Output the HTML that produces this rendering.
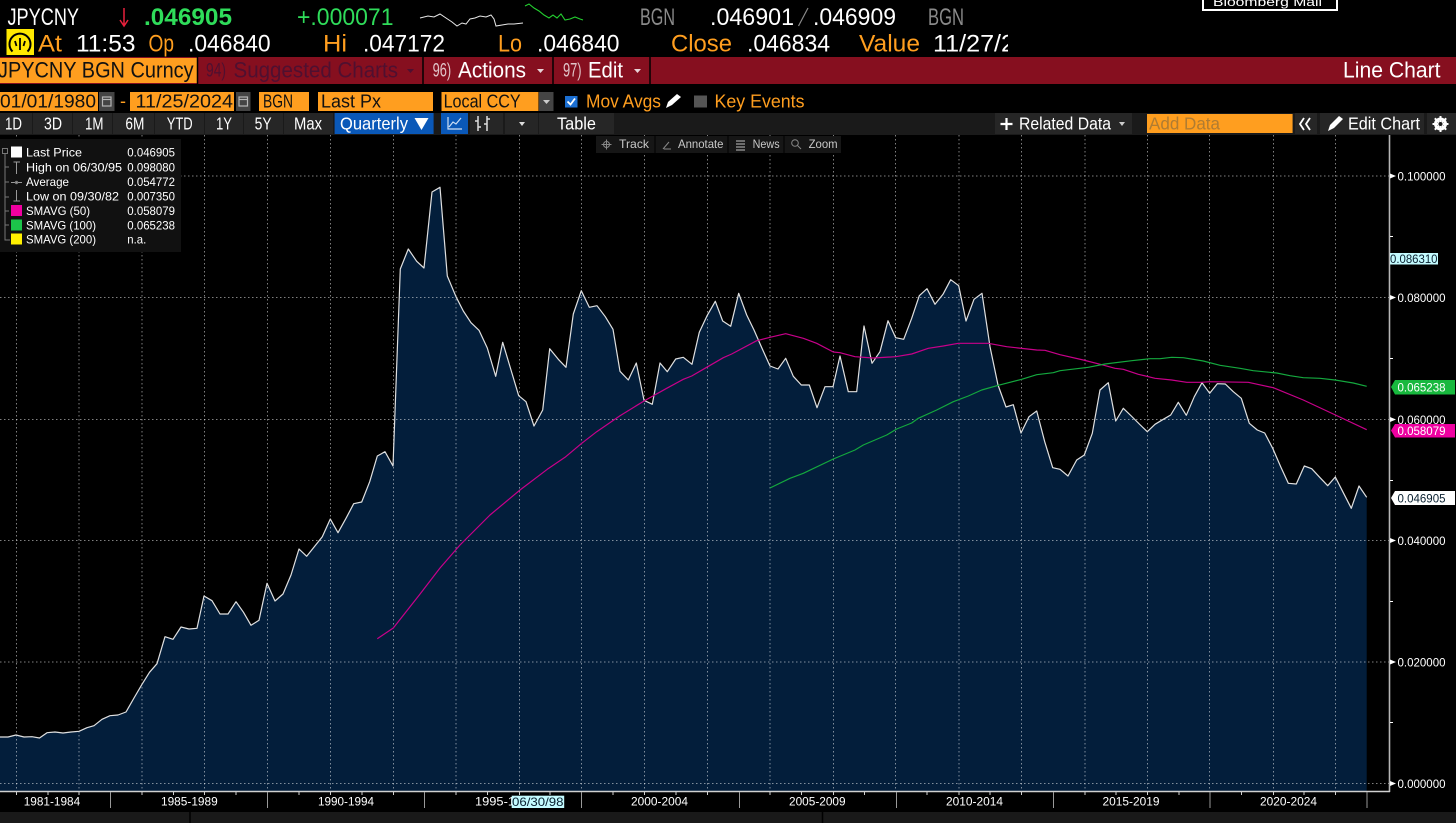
<!DOCTYPE html>
<html><head><meta charset="utf-8"><title>JPYCNY BGN Curncy</title>
<style>
html,body{margin:0;padding:0;background:#000;width:1456px;height:823px;overflow:hidden}
svg{display:block;position:absolute;left:0;top:0}
text{font-family:"Liberation Sans",sans-serif;white-space:pre}
.r1{font-size:24px}.r3{font-size:22.5px}.r4{font-size:18px}.r5{font-size:17.5px}
.l{font-size:12px;fill:#fff}.a{font-size:12px;fill:#fff}
.o{fill:#ff9e1f}.w{fill:#fff}.g{fill:#8a8a8a}.gr{fill:#2fdc5a}.k{fill:#111}
</style></head><body>
<svg width="1456" height="823" viewBox="0 0 1456 823" xmlns="http://www.w3.org/2000/svg">
<rect width="1456" height="823" fill="#000"/>

<!-- Chart fill and lines -->
<polygon fill="#031e3b" points="0,791 0,737 8,737 16,735 24,737 32,736.7 39.5,738 47,732.7 55,732 63,733 71,732 79,731.3 87,727.7 94,725.7 102,719.3 110,715.7 118,715 126,712 134,698 142,684.3 149.5,672.3 157,663.7 165,636.7 173,639.3 181,627 189,629 197,628.3 204,596 212,600.7 220,614 228,614 236,601.7 243.5,612.3 251,625.3 259,620.3 267,583.3 275,601 283,594 291,575 299,549 306.7,556.3 314.7,546.3 322.3,536.7 330.3,519 338,532.7 346,518.3 353.7,503.7 361.7,502 369.7,481.7 377.3,456 385,451.7 393,466 400.3,269 408.3,249 416.7,261.3 424,268 432,192 440,187.3 447.3,276 456,296.7 463.3,311 471,322.7 479,330.3 487.3,348 495.7,376.3 502.7,342.3 510.7,369 518.7,395.7 526,401.7 534,426 542.7,410 549.7,348.7 558.3,359.3 566,367.3 573.3,314 581.3,290.7 589.3,307.3 597,305.7 605.3,316.7 613,329.3 620,371.3 628.3,380 636.3,363 644,400.3 652.3,404.3 660,363 667.3,371.7 675.7,359 683.3,357.3 692,364.3 699.3,332.3 707.3,315.3 715.3,301.3 722.7,321 730.7,326.3 738.7,293.3 746.7,315 754,330 762,348.3 770,366 778,369 785.7,358.3 793.3,376.3 801.3,385 809.3,385 817,407.7 825,386.7 833,386.7 840,356 848.3,391.7 856.7,391.7 864,326 872,363.3 880,351.7 888,320.7 895.7,337.7 903.7,339.3 911.7,318.3 919.3,295.7 927,288.7 935,304.3 943,294.3 950.7,279.7 958.7,285.7 966,321 974,299.3 982,293.3 990,346.7 998,385 1006,407 1013.3,404.7 1021,433 1029,416.7 1036.7,411 1044.7,441.7 1052.7,467.7 1060,469.3 1068,476 1076.7,460 1084.3,455 1092.3,433.3 1100,390 1108.3,382.7 1115.7,421 1123.3,408.3 1131.3,416 1139.3,424 1147.3,431.7 1155,424.3 1163.3,419.3 1170.7,415 1178.3,402.3 1186.3,415.3 1194.3,396.7 1202,382.7 1209.7,393.3 1217.3,383.7 1225.3,384 1233.3,391.7 1241.3,398.3 1249.3,423.3 1257.3,430 1264.7,433 1272.7,448.3 1280.7,466.7 1288.3,483.3 1296.3,484 1304.3,466 1311.7,468.7 1319.7,477.3 1327.7,485.7 1335.3,477 1343.3,492.7 1351.3,508.3 1359,486 1366.7,497.3 1366.7,791"/>

<g stroke="#fff" stroke-opacity=".5" stroke-width="1" stroke-dasharray="1.5 2.5" fill="none">
<path d="M0 176H1389M0 297.5H1389M0 419.5H1389M0 540.5H1389M0 662H1389M0 783.5H1389"/>
<path d="M16.5 135V791M79 135V791M142 135V791M204.5 135V791M267.5 135V791M330.5 135V791M393.5 135V791M456 135V791M519.5 135V791M581.5 135V791M644.5 135V791M707.5 135V791M770 135V791M833.5 135V791M895.5 135V791M959 135V791M1021.5 135V791M1085 135V791M1147.5 135V791M1209.5 135V791M1273.5 135V791M1335.5 135V791"/>
</g>

<polyline fill="none" stroke="#e0e0e0" stroke-width="1.2" stroke-linejoin="round" points="0,737 8,737 16,735 24,737 32,736.7 39.5,738 47,732.7 55,732 63,733 71,732 79,731.3 87,727.7 94,725.7 102,719.3 110,715.7 118,715 126,712 134,698 142,684.3 149.5,672.3 157,663.7 165,636.7 173,639.3 181,627 189,629 197,628.3 204,596 212,600.7 220,614 228,614 236,601.7 243.5,612.3 251,625.3 259,620.3 267,583.3 275,601 283,594 291,575 299,549 306.7,556.3 314.7,546.3 322.3,536.7 330.3,519 338,532.7 346,518.3 353.7,503.7 361.7,502 369.7,481.7 377.3,456 385,451.7 393,466 400.3,269 408.3,249 416.7,261.3 424,268 432,192 440,187.3 447.3,276 456,296.7 463.3,311 471,322.7 479,330.3 487.3,348 495.7,376.3 502.7,342.3 510.7,369 518.7,395.7 526,401.7 534,426 542.7,410 549.7,348.7 558.3,359.3 566,367.3 573.3,314 581.3,290.7 589.3,307.3 597,305.7 605.3,316.7 613,329.3 620,371.3 628.3,380 636.3,363 644,400.3 652.3,404.3 660,363 667.3,371.7 675.7,359 683.3,357.3 692,364.3 699.3,332.3 707.3,315.3 715.3,301.3 722.7,321 730.7,326.3 738.7,293.3 746.7,315 754,330 762,348.3 770,366 778,369 785.7,358.3 793.3,376.3 801.3,385 809.3,385 817,407.7 825,386.7 833,386.7 840,356 848.3,391.7 856.7,391.7 864,326 872,363.3 880,351.7 888,320.7 895.7,337.7 903.7,339.3 911.7,318.3 919.3,295.7 927,288.7 935,304.3 943,294.3 950.7,279.7 958.7,285.7 966,321 974,299.3 982,293.3 990,346.7 998,385 1006,407 1013.3,404.7 1021,433 1029,416.7 1036.7,411 1044.7,441.7 1052.7,467.7 1060,469.3 1068,476 1076.7,460 1084.3,455 1092.3,433.3 1100,390 1108.3,382.7 1115.7,421 1123.3,408.3 1131.3,416 1139.3,424 1147.3,431.7 1155,424.3 1163.3,419.3 1170.7,415 1178.3,402.3 1186.3,415.3 1194.3,396.7 1202,382.7 1209.7,393.3 1217.3,383.7 1225.3,384 1233.3,391.7 1241.3,398.3 1249.3,423.3 1257.3,430 1264.7,433 1272.7,448.3 1280.7,466.7 1288.3,483.3 1296.3,484 1304.3,466 1311.7,468.7 1319.7,477.3 1327.7,485.7 1335.3,477 1343.3,492.7 1351.3,508.3 1359,486 1366.7,497.3"/>

<polyline fill="none" stroke="#c8008a" stroke-width="1.2" stroke-linejoin="round" points="377.3,638.7 393.3,628 419.3,595 440,568 460,545 490,515 520,490 547.3,469.3 565,457.3 581.7,443.3 596.7,431.7 620,415.7 644,401 666.7,388.3 683.3,379.3 691.7,376 706.7,367.3 723.3,357.7 731.7,354 756.7,340.7 770,337.3 785.7,333.7 803.3,338.3 816.7,343.3 833.3,352 840,352.7 855,356.7 873.3,358 895.7,356.7 911.7,354 928.3,348.3 943.3,346 958.3,343.3 988.3,343.3 1006.7,346.7 1036.7,350 1045,350.3 1060,354.7 1083.3,360 1101.7,364.7 1115,368.3 1123.3,369.3 1138.3,374.3 1155,378.3 1171.7,380 1186.7,382.3 1201.7,382.3 1210,381.7 1248.3,382.3 1273.3,387.7 1303.3,400 1333.3,414 1366.7,429.7"/>
<polyline fill="none" stroke="#14a83e" stroke-width="1.2" stroke-linejoin="round" points="770,488 790,478.3 803.3,473.3 833.3,459 855,450 863.3,445 886.7,435 896.7,429 911.7,423 918.3,418.3 936.7,410 953.3,401.7 968.3,396 981.7,390 998.3,385.3 1021.7,379.3 1036.7,374.7 1053.3,372.7 1060,370.7 1088.3,367.3 1105,364 1131.7,360.7 1150,358.7 1160,358.7 1171.7,357.3 1183.3,357.7 1203.3,361 1220,365.3 1240,368.3 1253.3,370.7 1276.7,373 1290,375.7 1303.3,377.7 1320,378.3 1335,380 1353.3,383 1366.7,386.3"/>

<!-- Header row 1 -->
<text class="r1 w" x="7.5" y="25" textLength="71.5" lengthAdjust="spacingAndGlyphs">JPYCNY</text>
<path d="M124 8V25M120 20L124 26L128 20" fill="none" stroke="#e8213c" stroke-width="1.5"/>
<text class="r1 gr" x="144" y="25" textLength="88" lengthAdjust="spacingAndGlyphs" font-weight="bold">.046905</text>
<text class="r1 gr" x="297" y="25" textLength="96.5" lengthAdjust="spacingAndGlyphs">+.000071</text>
<polyline fill="none" stroke="#e8e8e8" stroke-width="1" points="420,18 428,16 434,17 440,14 446,18 452,22 457,26 462,23 466,24 470,19 475,18 480,16 486,17 491,15 494,19 496,26 502,25 508,24 514,24 523,23"/>
<polyline fill="none" stroke="#24d030" stroke-width="1.1" points="525,6 529,4 534,8 539,11 544,15 549,18 553,15 557,18 561,14 565,20 570,19 575,17 580,19 583,20"/>
<text class="r1 g" x="640" y="25" textLength="35" lengthAdjust="spacingAndGlyphs">BGN</text>
<text class="r1 w" x="710" y="25" textLength="84" lengthAdjust="spacingAndGlyphs">.046901</text>
<path d="M798.5 26L808 8" stroke="#8a8a8a" stroke-width="1.2"/>
<text class="r1 w" x="813" y="25" textLength="83" lengthAdjust="spacingAndGlyphs">.046909</text>
<text class="r1 g" x="928" y="25" textLength="36" lengthAdjust="spacingAndGlyphs">BGN</text>
<rect x="1203" y="-3" width="134" height="13" fill="#000" stroke="#fff" stroke-width="2"/>
<text x="1213" y="6" font-size="12" fill="#fff" textLength="109" lengthAdjust="spacingAndGlyphs">Bloomberg Mail</text>

<!-- Header row 2 -->
<rect x="6.500" y="29" width="27.500" height="26" fill="#ffe800"/>
<path d="M12.500 51.500A10.500 10.500 0 1 1 27.500 51.500" fill="none" stroke="#000" stroke-width="2"/>
<path d="M20 38V50M15 41L16.500 46M25 41L23.500 46" stroke="#000" stroke-width="1.800" fill="none"/>
<text class="r1 o" x="38" y="51.500" textLength="24" lengthAdjust="spacingAndGlyphs">At</text>
<text class="r1 w" x="76" y="51.500" textLength="59.500" lengthAdjust="spacingAndGlyphs">11:53</text>
<text class="r1 o" x="148.500" y="51.500" textLength="25.500" lengthAdjust="spacingAndGlyphs">Op</text>
<text class="r1 w" x="188" y="51.500" textLength="82.600" lengthAdjust="spacingAndGlyphs">.046840</text>
<text class="r1 o" x="323" y="51.500" textLength="24" lengthAdjust="spacingAndGlyphs">Hi</text>
<text class="r1 w" x="363" y="51.500" textLength="82" lengthAdjust="spacingAndGlyphs">.047172</text>
<text class="r1 o" x="498" y="51.500" textLength="24" lengthAdjust="spacingAndGlyphs">Lo</text>
<text class="r1 w" x="537" y="51.500" textLength="82.500" lengthAdjust="spacingAndGlyphs">.046840</text>
<text class="r1 o" x="671" y="51.500" textLength="61" lengthAdjust="spacingAndGlyphs">Close</text>
<text class="r1 w" x="747" y="51.500" textLength="83" lengthAdjust="spacingAndGlyphs">.046834</text>
<text class="r1 o" x="859" y="51.500" textLength="61" lengthAdjust="spacingAndGlyphs">Value</text>
<svg x="933" y="28" width="75" height="30" viewBox="933 28 75 30"><text class="r1 w" x="933" y="51.500" textLength="96" lengthAdjust="spacingAndGlyphs">11/27/24</text></svg>

<!-- Row 3: red bar -->
<rect x="0" y="57" width="1456" height="27" fill="#860f1f"/>
<rect x="0" y="58" width="197" height="25" fill="#ff9e1f"/>
<text class="r3 k" x="-2" y="77.500" textLength="195.600" lengthAdjust="spacingAndGlyphs">JPYCNY BGN Curncy</text>
<path d="M197.500 57V84M423 57V84M553 57V84M650 57V84" stroke="#000" stroke-width="1.5"/>
<text x="206" y="76.500" font-size="19" fill="#4f1030" textLength="20" lengthAdjust="spacingAndGlyphs">94)</text>
<text class="r3" x="233.500" y="77.500" fill="#4f1030" textLength="164.500" lengthAdjust="spacingAndGlyphs">Suggested Charts</text>
<path d="M407 69H414L410.500 73Z" fill="#4f1030"/>
<text x="432.600" y="76.500" font-size="19" fill="#e0c4c8" textLength="18.500" lengthAdjust="spacingAndGlyphs">96)</text>
<text class="r3 w" x="458" y="77.500" textLength="68" lengthAdjust="spacingAndGlyphs">Actions</text>
<path d="M537 69H544L540.500 73Z" fill="#e8d4d8"/>
<text x="563" y="76.500" font-size="19" fill="#e0c4c8" textLength="18.600" lengthAdjust="spacingAndGlyphs">97)</text>
<text class="r3 w" x="588" y="77.500" textLength="35" lengthAdjust="spacingAndGlyphs">Edit</text>
<path d="M634 69H641L637.500 73Z" fill="#e8d4d8"/>
<text class="r3 w" x="1343" y="77.500" textLength="97.500" lengthAdjust="spacingAndGlyphs">Line Chart</text>

<!-- Row 4 -->
<g fill="#ff9e1f">
<rect x="0" y="92" width="98" height="19"/>
<rect x="130" y="92" width="104" height="19"/>
<rect x="259" y="92" width="50" height="19"/>
<rect x="318" y="92" width="115" height="19"/>
<rect x="441.500" y="92" width="97" height="19"/>
</g>
<g fill="#444">
<rect x="99" y="92" width="15.500" height="19"/>
<rect x="236" y="92" width="14.500" height="19"/>
<rect x="539" y="92" width="14.500" height="19"/>
</g>
<g fill="none" stroke="#b5b5b5" stroke-width="1.200">
<rect x="102.500" y="97" width="8.500" height="9"/><path d="M102.500 99.500H111"/>
<rect x="239" y="97" width="8.500" height="9"/><path d="M239 99.500H247.500"/>
</g>
<path d="M543 100H550L546.500 104Z" fill="#ccc"/>
<text class="r4 k" x="0" y="107.500" textLength="96" lengthAdjust="spacingAndGlyphs">01/01/1980</text>
<text class="r4 o" x="120" y="107">-</text>
<text class="r4 k" x="135.500" y="107.500" textLength="97.500" lengthAdjust="spacingAndGlyphs">11/25/2024</text>
<text class="r4 k" x="263" y="107.500" textLength="30" lengthAdjust="spacingAndGlyphs">BGN</text>
<text class="r4 k" x="321" y="107.500" textLength="60" lengthAdjust="spacingAndGlyphs">Last Px</text>
<text class="r4 k" x="443.600" y="107.500" textLength="77" lengthAdjust="spacingAndGlyphs">Local CCY</text>
<rect x="565" y="96" width="12.500" height="11.500" fill="#1b6fd2"/>
<path d="M567.500 101.500L570.500 104.500L575 98.500" fill="none" stroke="#fff" stroke-width="1.800"/>
<text class="r4 o" x="586" y="107.500" textLength="75" lengthAdjust="spacingAndGlyphs">Mov Avgs</text>
<path d="M666 108L668 102L677 94L681 97L672 105Z" fill="#fff"/>
<rect x="694" y="95.500" width="13" height="12" fill="#555"/>
<text class="r4 o" x="714.500" y="107.500" textLength="90" lengthAdjust="spacingAndGlyphs">Key Events</text>

<!-- Row 5 -->
<rect x="0" y="113" width="1456" height="22" fill="#1a1a1a"/>
<g fill="#262626">
<rect x="0" y="113" width="32" height="21"/><rect x="33" y="113" width="39" height="21"/><rect x="73" y="113" width="39" height="21"/><rect x="113" y="113" width="41" height="21"/><rect x="155" y="113" width="49" height="21"/><rect x="205" y="113" width="38" height="21"/><rect x="244" y="113" width="39" height="21"/><rect x="284" y="113" width="49" height="21"/>
<rect x="470" y="113" width="33" height="21"/><rect x="505" y="113" width="33" height="21"/><rect x="539" y="113" width="75" height="21"/>
<rect x="995" y="113" width="137" height="21"/><rect x="1295" y="113" width="22" height="21"/><rect x="1320" y="113" width="104" height="21"/><rect x="1427" y="113" width="29" height="21"/>
</g>
<rect x="334.600" y="113" width="99" height="21" fill="#0a58b8"/>
<rect x="441" y="113" width="27" height="21" fill="#0a58b8"/>
<g>
<text class="r5 w" x="5" y="129.500" textLength="17" lengthAdjust="spacingAndGlyphs">1D</text>
<text class="r5 w" x="44" y="129.500" textLength="18" lengthAdjust="spacingAndGlyphs">3D</text>
<text class="r5 w" x="85" y="129.500" textLength="18.500" lengthAdjust="spacingAndGlyphs">1M</text>
<text class="r5 w" x="125.400" y="129.500" textLength="19" lengthAdjust="spacingAndGlyphs">6M</text>
<text class="r5 w" x="166.700" y="129.500" textLength="26" lengthAdjust="spacingAndGlyphs">YTD</text>
<text class="r5 w" x="216" y="129.500" textLength="16" lengthAdjust="spacingAndGlyphs">1Y</text>
<text class="r5 w" x="254.600" y="129.500" textLength="17" lengthAdjust="spacingAndGlyphs">5Y</text>
<text class="r5 w" x="294" y="129.500" textLength="28" lengthAdjust="spacingAndGlyphs">Max</text>
<text class="r5 w" x="340" y="129.500" textLength="68" lengthAdjust="spacingAndGlyphs">Quarterly</text>
<text class="r5 w" x="557" y="129.500" textLength="39" lengthAdjust="spacingAndGlyphs">Table</text>
<text class="r5 w" x="1019" y="129.500" textLength="92" lengthAdjust="spacingAndGlyphs">Related Data</text>
<text class="r5 w" x="1348" y="129.500" textLength="72" lengthAdjust="spacingAndGlyphs">Edit Chart</text>
</g>
<path d="M414.500 118H428.500L421.500 130Z" fill="#fff"/>
<path d="M448 117V129H462M449 127L453 122L456 124L461 118" fill="none" stroke="#cfe0f5" stroke-width="1.200"/>
<path d="M478 116V131M475 121H478M478 127H481M487 116V131M484 124H487M487 119H490" stroke="#ddd" stroke-width="1.500" fill="none"/>
<path d="M519 122H525L522 126Z" fill="#ddd"/>
<path d="M1119 122H1125L1122 126Z" fill="#ccc"/>
<path d="M1006.500 118V130M1000.500 124H1012.500" stroke="#fff" stroke-width="2.200"/>
<rect x="1147" y="114" width="145.600" height="19" fill="#ff9e1f"/>
<text class="r5" x="1149" y="129.500" fill="#b07c32" textLength="71" lengthAdjust="spacingAndGlyphs">Add Data</text>
<path d="M1304 118L1300 124L1304 130M1310 118L1306 124L1310 130" fill="none" stroke="#fff" stroke-width="1.800"/>
<path d="M1328 131L1330 125L1339 116L1343 119L1334 128Z" fill="#fff"/>
<circle cx="1440.500" cy="124" r="5" fill="none" stroke="#fff" stroke-width="3"/>
<path d="M1440.500 116V132M1432.500 124H1448.500M1434.800 118.300L1446.200 129.700M1446.200 118.300L1434.800 129.700" stroke="#fff" stroke-width="2"/>
<circle cx="1440.500" cy="124" r="2" fill="#1a1a1a"/>

<!-- Chart toolbar -->
<rect x="596" y="136" width="245" height="17" fill="#161616"/>
<path d="M655 136V153M728 136V153M784 136V153" stroke="#000"/>
<g fill="none" stroke="#888" stroke-width="1">
<circle cx="606.500" cy="144.500" r="3"/><path d="M606.500 139.500V149.500M601.500 144.500H611.500"/>
<path d="M663 149L669 142M664 149H671"/>
<path d="M736 141H745M736 144H745M736 147H745M736 150H745" stroke-width="1.500"/>
<circle cx="795" cy="143" r="3.300"/><path d="M797.500 145.500L801 149"/>
</g>
<g font-size="12" fill="#c8c8c8">
<text x="619" y="148" textLength="30" lengthAdjust="spacingAndGlyphs">Track</text>
<text x="678" y="148" textLength="45.500" lengthAdjust="spacingAndGlyphs">Annotate</text>
<text x="752.600" y="148" textLength="27" lengthAdjust="spacingAndGlyphs">News</text>
<text x="808.600" y="148" textLength="29" lengthAdjust="spacingAndGlyphs">Zoom</text>
</g>

<!-- Legend -->
<rect x="0" y="139" width="181" height="113" fill="#111"/>
<g fill="none" stroke="#777" stroke-width="1">
<rect x="2.500" y="148.500" width="5" height="5"/>
<path d="M5 154V240H10M5 167H9M5 182H9M5 197H9M5 211H9M5 225H9"/>
<path d="M13.500 162H20M16.500 162V174" stroke="#999"/>
<path d="M11 182.500H22" stroke="#999"/><circle cx="16.500" cy="182.500" r="1.200" fill="#999"/>
<path d="M16.500 190V201M13.500 201H20" stroke="#999"/>
</g>
<rect x="11" y="146.500" width="11" height="11" fill="#fff"/>
<rect x="11" y="205" width="11" height="11" fill="#f000a0"/>
<rect x="11" y="219.500" width="11" height="11" fill="#1cc44a"/>
<rect x="11" y="233.500" width="11" height="11" fill="#fff000"/>
<text class="l" x="26" y="156.500" textLength="56" lengthAdjust="spacingAndGlyphs">Last Price</text>
<text class="l" x="26" y="171.500" textLength="96" lengthAdjust="spacingAndGlyphs">High on 06/30/95</text>
<text class="l" x="26" y="186" textLength="43" lengthAdjust="spacingAndGlyphs">Average</text>
<text class="l" x="26" y="200.500" textLength="93" lengthAdjust="spacingAndGlyphs">Low on 09/30/82</text>
<text class="l" x="26" y="215" textLength="64" lengthAdjust="spacingAndGlyphs">SMAVG (50)</text>
<text class="l" x="26" y="229.500" textLength="70" lengthAdjust="spacingAndGlyphs">SMAVG (100)</text>
<text class="l" x="26" y="243.500" textLength="70" lengthAdjust="spacingAndGlyphs">SMAVG (200)</text>
<text class="l" x="127.300" y="156.500" textLength="47.700" lengthAdjust="spacingAndGlyphs">0.046905</text>
<text class="l" x="127.300" y="171.500" textLength="47.700" lengthAdjust="spacingAndGlyphs">0.098080</text>
<text class="l" x="127.300" y="186" textLength="47.700" lengthAdjust="spacingAndGlyphs">0.054772</text>
<text class="l" x="127.300" y="200.500" textLength="47.700" lengthAdjust="spacingAndGlyphs">0.007350</text>
<text class="l" x="127.300" y="215" textLength="47.700" lengthAdjust="spacingAndGlyphs">0.058079</text>
<text class="l" x="127.300" y="229.500" textLength="47.700" lengthAdjust="spacingAndGlyphs">0.065238</text>
<text class="l" x="127.300" y="243.500" textLength="19" lengthAdjust="spacingAndGlyphs">n.a.</text>

<!-- Right axis -->
<path d="M1389.500 135V792" stroke="#b5b5b5" stroke-width="1.600"/>
<path d="M0 791.500H1390" stroke="#d0d0d0" stroke-width="1.400"/>
<g fill="#fff">
<path d="M1390 173.500L1396 176L1390 178.500Z"/><path d="M1390 295L1396 297.500L1390 300Z"/><path d="M1390 417L1396 419.500L1390 422Z"/><path d="M1390 538L1396 540.500L1390 543Z"/><path d="M1390 659.500L1396 662L1390 664.500Z"/><path d="M1390 781L1396 783.500L1390 786Z"/>
<rect x="1390" y="236" width="3" height="1"/><rect x="1390" y="358" width="3" height="1"/><rect x="1390" y="480" width="3" height="1"/><rect x="1390" y="601" width="3" height="1"/><rect x="1390" y="722" width="3" height="1"/>
</g>
<text class="a" x="1397.500" y="180.500" textLength="48" lengthAdjust="spacingAndGlyphs">0.100000</text>
<text class="a" x="1397.500" y="302" textLength="48" lengthAdjust="spacingAndGlyphs">0.080000</text>
<text class="a" x="1397.500" y="424" textLength="48" lengthAdjust="spacingAndGlyphs">0.060000</text>
<text class="a" x="1397.500" y="545" textLength="48" lengthAdjust="spacingAndGlyphs">0.040000</text>
<text class="a" x="1397.500" y="666.500" textLength="48" lengthAdjust="spacingAndGlyphs">0.020000</text>
<text class="a" x="1397.500" y="788" textLength="48" lengthAdjust="spacingAndGlyphs">0.000000</text>
<rect x="1390" y="253" width="48" height="11.500" fill="#c4fbff"/>
<text x="1390" y="263" font-size="12" fill="#0a2030" textLength="47.500" lengthAdjust="spacingAndGlyphs">0.086310</text>
<path d="M1391 387L1395 380H1455V394.500H1395Z" fill="#18b83e"/>
<text class="a" x="1397.500" y="391.500" textLength="48" lengthAdjust="spacingAndGlyphs">0.065238</text>
<path d="M1391 430.500L1395 424H1455V437.500H1395Z" fill="#ee00a0"/>
<text class="a" x="1397.500" y="435" textLength="48" lengthAdjust="spacingAndGlyphs">0.058079</text>
<path d="M1391 498L1395 491H1455V505H1395Z" fill="#fff"/>
<text x="1397.500" y="502.500" font-size="12" fill="#0a2030" textLength="48" lengthAdjust="spacingAndGlyphs">0.046905</text>

<!-- Bottom axis -->
<g stroke="#d0d0d0" stroke-width="1">
<path d="M110.500 792V808M267.500 792V808M424.500 792V808M581.500 792V808M739.500 792V808M896.500 792V808M1053.500 792V808M1210 792V808M1367 792V808" stroke="#999"/>
<path d="M16.500 792V795M48 792V795M79 792V795M142 792V795M173.500 792V795M204.500 792V795M236 792V795M299 792V795M330.500 792V795M362 792V795M393.500 792V795M456 792V795M487.500 792V795M519.500 792V795M550 792V795M613 792V795M644.500 792V795M676 792V795M707.500 792V795M770 792V795M801.500 792V795M833.500 792V795M864.500 792V795M927 792V795M959 792V795M990 792V795M1021.500 792V795M1085 792V795M1116 792V795M1147.500 792V795M1179 792V795M1241.500 792V795M1273.500 792V795M1304 792V795M1335.500 792V795"/>
</g>
<text class="a" x="23.700" y="805.500" textLength="56.500" lengthAdjust="spacingAndGlyphs">1981-1984</text>
<text class="a" x="161" y="805.500" textLength="56.700" lengthAdjust="spacingAndGlyphs">1985-1989</text>
<text class="a" x="318" y="805.500" textLength="56" lengthAdjust="spacingAndGlyphs">1990-1994</text>
<text class="a" x="475" y="805.500" textLength="40" lengthAdjust="spacingAndGlyphs">1995-1</text>
<rect x="511.700" y="795.700" width="52.500" height="12.300" fill="#c4fbff"/>
<text x="512" y="806" font-size="12" fill="#0a2030" textLength="51.500" lengthAdjust="spacingAndGlyphs">06/30/98</text>
<text class="a" x="631" y="805.500" textLength="57" lengthAdjust="spacingAndGlyphs">2000-2004</text>
<text class="a" x="789" y="805.500" textLength="56.600" lengthAdjust="spacingAndGlyphs">2005-2009</text>
<text class="a" x="946" y="805.500" textLength="57" lengthAdjust="spacingAndGlyphs">2010-2014</text>
<text class="a" x="1102.500" y="805.500" textLength="57" lengthAdjust="spacingAndGlyphs">2015-2019</text>
<text class="a" x="1260" y="805.500" textLength="57" lengthAdjust="spacingAndGlyphs">2020-2024</text>

<!-- Bottom strip -->
<rect x="0" y="812" width="1456" height="11" fill="#191919"/>
<path d="M190 812V823M822.500 812V823" stroke="#000" stroke-width="1.500"/>
</svg>
</body></html>
